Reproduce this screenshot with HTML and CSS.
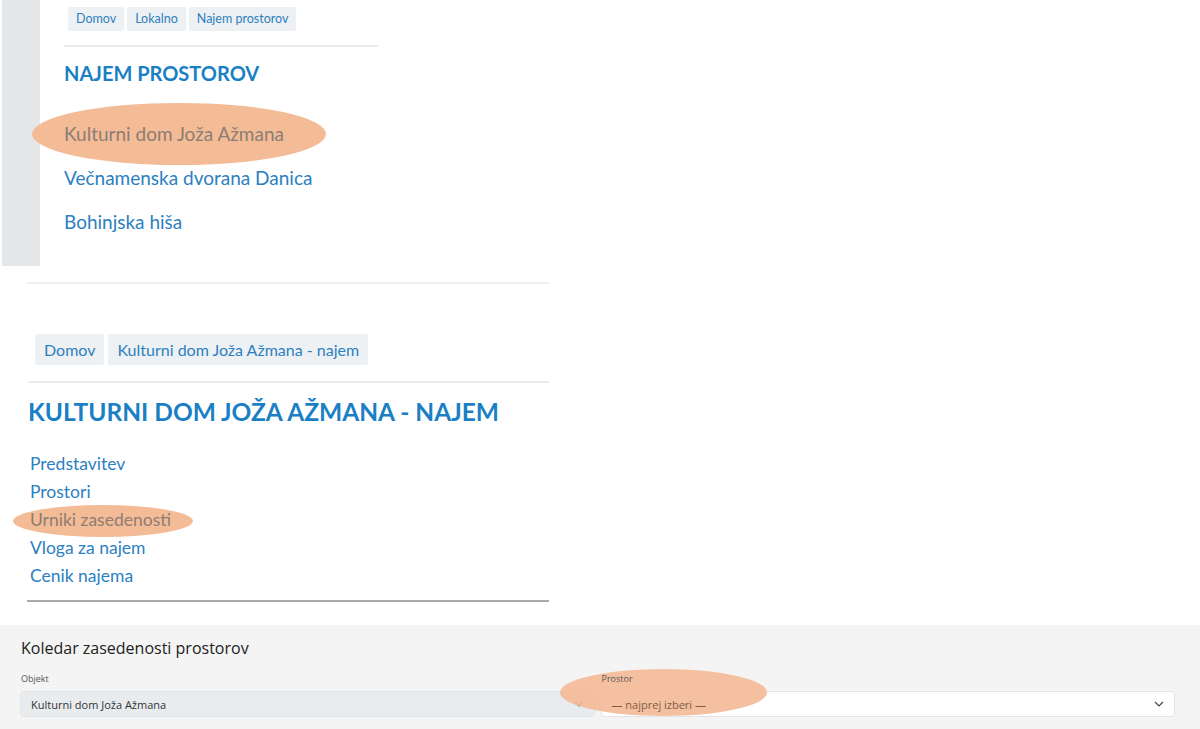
FILE: index.html
```html
<!DOCTYPE html>
<html lang="sl">
<head>
    <meta charset="UTF-8">
    <meta name="viewport" content="width=device-width, initial-scale=1.0">
    <title>Najem prostorov</title>
    <link rel="stylesheet" href="styles.css">
</head>
<body>
    <div class="shot-one">
        <div class="side-strip"></div>
        <div class="shot-one-main">
            <ul class="crumbs">
                <li><a href="#">Domov</a></li>
                <li><a href="#">Lokalno</a></li>
                <li><a href="#">Najem prostorov</a></li>
            </ul>
            <h1 class="page-title">NAJEM PROSTOROV</h1>
            <ul class="venue-list">
                <li class="marked"><span class="mark mark-venue"></span><a href="#">Kulturni dom Joža Ažmana</a></li>
                <li><a href="#">Večnamenska dvorana Danica</a></li>
                <li><a href="#">Bohinjska hiša</a></li>
            </ul>
        </div>
    </div>

    <div class="shot-two">
        <ul class="crumbs crumbs-big">
            <li><a href="#">Domov</a></li>
            <li><a href="#">Kulturni dom Joža Ažmana - najem</a></li>
        </ul>
        <h1 class="page-title page-title-big">KULTURNI DOM JOŽA AŽMANA - NAJEM</h1>
        <ul class="sub-menu">
            <li><a href="#">Predstavitev</a></li>
            <li><a href="#">Prostori</a></li>
            <li class="marked"><span class="mark mark-menu"></span><a href="#">Urniki zasedenosti</a></li>
            <li><a href="#">Vloga za najem</a></li>
            <li><a href="#">Cenik najema</a></li>
        </ul>
    </div>

    <div class="calendar-panel">
        <h2>Koledar zasedenosti prostorov</h2>
        <div class="filter-row">
            <div class="field">
                <label for="objekt">Objekt</label>
                <div class="fake-select disabled" id="objekt">
                    <span>Kulturni dom Joža Ažmana</span>
                    <svg width="10" height="6" viewBox="0 0 10 6"><path d="M1 1l4 4 4-4" fill="none" stroke="#555" stroke-width="1.2"/></svg>
                </div>
            </div>
            <div class="field marked">
                <span class="mark mark-field"></span>
                <label for="prostor">Prostor</label>
                <div class="fake-select" id="prostor">
                    <span class="over">— najprej izberi —</span>
                    <svg width="10" height="6" viewBox="0 0 10 6"><path d="M1 1l4 4 4-4" fill="none" stroke="#444" stroke-width="1.2"/></svg>
                </div>
            </div>
        </div>
    </div>
</body>
</html>
```

FILE: styles.css
```css
body {
    margin: 0;
    background-color: #fff;
    font-family: "Lato", "Open Sans", sans-serif;
    width: 1200px;
    height: 729px;
    overflow: hidden;
}
ul {
    list-style: none;
    margin: 0;
    padding: 0;
}
a {
    color: #2c80bf;
    text-decoration: none;
}

/* first shot */
.shot-one {
    display: flex;
    height: 266px;
}
.side-strip {
    width: 38px;
    margin-left: 2px;
    background-color: #e5e6e8;
}
.shot-one-main {
    width: 314px;
    padding-left: 24px;
}
.crumbs {
    display: flex;
    gap: 3px;
    margin: 7px 0 0 4px;
    padding-bottom: 14px;
}
.crumbs li a {
    display: block;
    background-color: #eef1f4;
    border-radius: 2px;
    padding: 0 8px;
    height: 24px;
    line-height: 24px;
    font-size: 12.5px;
}
.page-title {
    margin: 0;
    border-top: 2px solid #ececec;
    color: #1a7fc4;
    font-weight: 700;
    font-size: 20px;
    padding-top: 12px;
    line-height: 28px;
}
.venue-list {
    margin-top: 33px;
}
.venue-list li {
    position: relative;
    height: 44px;
    line-height: 28px;
    font-size: 19px;
}
.marked {
    position: relative;
}
.marked a {
    position: relative;
    color: #8d7d72;
}
.mark {
    position: absolute;
    border-radius: 50%;
    background-color: #f4bb97;
}
.mark-venue {
    left: -32px;
    top: -17px;
    width: 294px;
    height: 62px;
}

/* second shot */
.shot-two {
    width: 522px;
    margin-left: 27px;
    border-top: 2px solid #efefef;
    margin-top: 16px;
    padding-top: 50px;
    border-bottom: 2px solid #aaa;
    padding-bottom: 10px;
}
.crumbs-big {
    gap: 4px;
    margin: 0 0 16px 8px;
    padding-bottom: 0;
}
.crumbs-big li a {
    height: 31px;
    line-height: 31px;
    font-size: 16px;
    padding: 0 9px;
}
.page-title-big {
    font-size: 24.5px;
    padding-top: 14px;
    line-height: 30px;
    margin-left: 1px;
}
.sub-menu {
    margin: 23px 0 0 3px;
}
.sub-menu li {
    height: 28px;
    line-height: 28px;
    font-size: 17.5px;
}
.mark-menu {
    left: -17px;
    top: -1px;
    width: 180px;
    height: 32px;
}

/* bottom panel */
.calendar-panel {
    margin-top: 23px;
    background-color: #f4f4f4;
    padding: 11px 25px 0 20px;
    height: 93px;
    font-family: "Open Sans", sans-serif;
}
.calendar-panel h2 {
    margin: 0 0 0 1px;
    font-size: 16px;
    font-weight: 400;
    color: #222;
    line-height: 24px;
}
.filter-row {
    display: flex;
    gap: 6px;
    margin-top: 12px;
}
.field {
    flex: 1;
}
.field label {
    position: relative;
    display: block;
    font-size: 9px;
    color: #555;
    margin-left: 1px;
    line-height: 14px;
    margin-bottom: 5px;
}
.mark-field {
    left: -41px;
    top: -3px;
    width: 207px;
    height: 47px;
    opacity: 0.92;
}
.fake-select {
    display: flex;
    align-items: center;
    justify-content: space-between;
    height: 24px;
    padding: 0 10px;
    border: 1px solid #e4e4e4;
    border-radius: 4px;
    background-color: #fff;
    font-size: 11px;
    color: #333;
}
.fake-select.disabled {
    background-color: #e9ecef;
}
.fake-select .over {
    position: relative;
    color: #7d5d48;
}
```
